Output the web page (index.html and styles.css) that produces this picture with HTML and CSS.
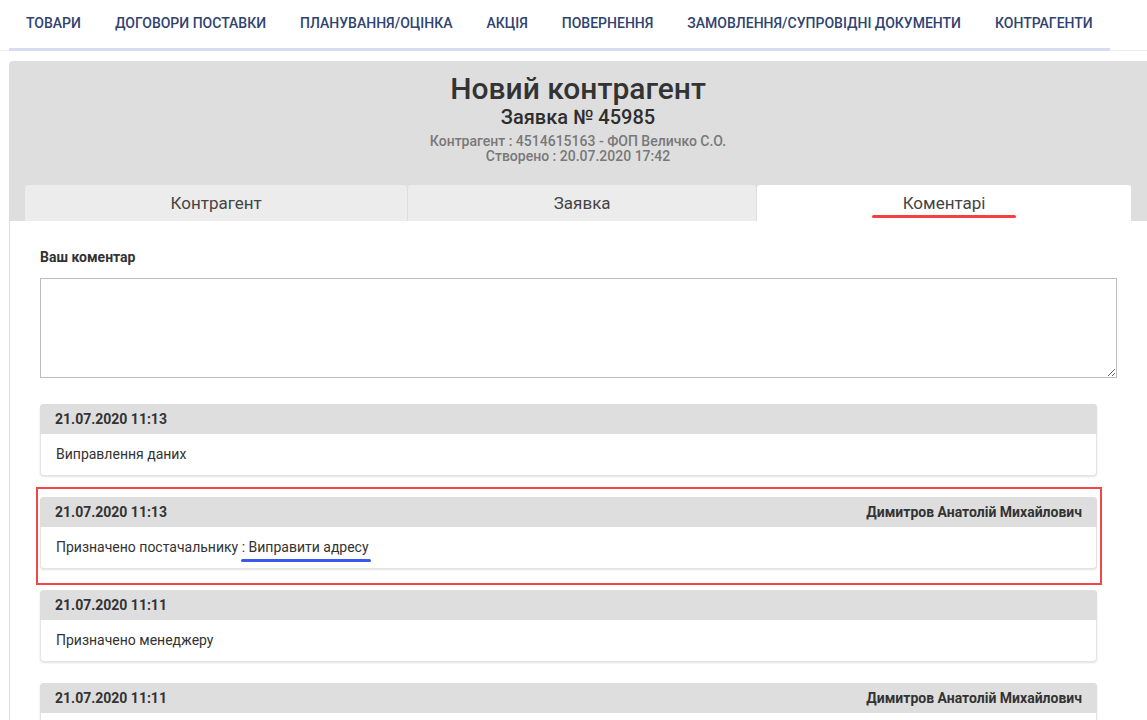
FILE: index.html
```html
<!DOCTYPE html>
<html lang="uk">
<head>
<meta charset="utf-8">
<title>Новий контрагент</title>
<link rel="stylesheet" href="styles.css">
</head>
<body>
<nav class="topnav">
  <ul class="topnav-list">
    <li class="topnav-item">Товари</li>
    <li class="topnav-item">Договори поставки</li>
    <li class="topnav-item">Планування/оцінка</li>
    <li class="topnav-item">Акція</li>
    <li class="topnav-item">Повернення</li>
    <li class="topnav-item">Замовлення/супровідні документи</li>
    <li class="topnav-item">Контрагенти</li>
  </ul>
</nav>

<main class="page">
  <header class="page-header">
    <h1 class="page-title">Новий контрагент</h1>
    <h2 class="page-subtitle">Заявка № 45985</h2>
    <div class="page-meta">
      <div>Контрагент : 4514615163 - ФОП Величко С.О.</div>
      <div>Створено : 20.07.2020 17:42</div>
    </div>
    <div class="tabs">
      <div class="tab">Контрагент</div>
      <div class="tab">Заявка</div>
      <div class="tab tab-active">Коментарі</div>
    </div>
  </header>

  <section class="panel">
    <label class="field-label" for="comment">Ваш коментар</label>
    <textarea id="comment" class="comment-input"></textarea>

    <div class="comments">
      <article class="comment">
        <div class="comment-head"><span class="comment-date">21.07.2020 11:13</span></div>
        <div class="comment-body">Виправлення даних</div>
      </article>

      <article class="comment comment-highlight">
        <div class="comment-head"><span class="comment-date">21.07.2020 11:13</span><span class="comment-author">Димитров Анатолій Михайлович</span></div>
        <div class="comment-body">Призначено постачальнику <span class="marked">: Виправити адресу</span></div>
      </article>

      <article class="comment">
        <div class="comment-head"><span class="comment-date">21.07.2020 11:11</span></div>
        <div class="comment-body">Призначено менеджеру</div>
      </article>

      <article class="comment">
        <div class="comment-head"><span class="comment-date">21.07.2020 11:11</span><span class="comment-author">Димитров Анатолій Михайлович</span></div>
        <div class="comment-body"></div>
      </article>
    </div>
  </section>
</main>
</body>
</html>
```

FILE: styles.css
```css
* { box-sizing: border-box; }

html, body {
  margin: 0;
  padding: 0;
  background: #ffffff;
  font-family: Roboto, "Noto Sans", "Liberation Sans", sans-serif;
  color: #333333;
  overflow: hidden;
}

.topnav {
  height: 51px;
  border-bottom: 1px solid #ececec;
}

.topnav-list {
  display: inline-flex;
  margin: 0 0 0 9px;
  padding: 0;
  list-style: none;
  height: 51px;
  border-bottom: 3px solid #d5ddee;
}

.topnav-item {
  padding: 0 17px;
  line-height: 46px;
  font-size: 14px;
  font-weight: 500;
  text-transform: uppercase;
  color: #2f4370;
  white-space: nowrap;
}

.page {
  margin: 10px 0 0 9px;
}

.page-header {
  background: #dedede;
  border-top-left-radius: 4px;
  padding: 11px 16px 0;
  text-align: center;
}

.page-title {
  margin: 0;
  font-size: 30px;
  line-height: 34px;
  font-weight: 500;
  color: #333333;
}

.page-subtitle {
  margin: 0;
  font-size: 20px;
  line-height: 22px;
  font-weight: 500;
  color: #2e2e2e;
}

.page-meta {
  margin-top: 6px;
  font-size: 14px;
  line-height: 15px;
  font-weight: 500;
  color: #787878;
}

.tabs {
  display: flex;
  gap: 1px;
  margin-top: 21px;
}

.tab {
  flex: 1 1 auto;
  height: 36px;
  line-height: 36px;
  font-size: 17px;
  color: #444444;
  background: #ececec;
  border-radius: 3px 3px 0 0;
  text-align: center;
}

.tab-active {
  background: #ffffff;
  position: relative;
}

.tab-active::after {
  content: "";
  position: absolute;
  left: 50%;
  bottom: 3px;
  width: 144px;
  margin-left: -72px;
  height: 3px;
  border-radius: 2px;
  background: #f34141;
}

.panel {
  border-left: 1px solid #dddddd;
  padding: 26px 30px 0 30px;
  min-height: 520px;
}

.field-label {
  display: block;
  font-size: 14px;
  line-height: 20px;
  font-weight: 700;
  color: #333333;
}

.comment-input {
  display: block;
  width: 100%;
  height: 100px;
  margin: 11px 0 26px;
  border: 1px solid #bdbdbd;
  border-radius: 0;
  resize: vertical;
  font-family: inherit;
  font-size: 14px;
  background: #ffffff;
}

.comments {
  margin-right: 20px;
  display: flex;
  flex-direction: column;
  gap: 21px;
}

.comment {
  border: 1px solid #e4e4e4;
  border-top: none;
  border-radius: 4px;
  background: #ffffff;
  box-shadow: 0 1px 2px rgba(0, 0, 0, 0.12);
}

.comment-head {
  display: flex;
  justify-content: space-between;
  height: 30px;
  line-height: 30px;
  padding: 0 15px;
  margin: 0 -1px;
  background: #dedede;
  border-radius: 4px 4px 0 0;
  font-size: 14px;
  font-weight: 700;
  color: #333333;
}

.comment-body {
  height: 41px;
  line-height: 40px;
  padding: 0 15px;
  font-size: 14px;
  color: #333333;
}

.comment-highlight {
  position: relative;
}

.comment-highlight::before {
  content: "";
  position: absolute;
  left: -5px;
  top: -10px;
  right: -6px;
  bottom: -17px;
  border: 2px solid #f04848;
  pointer-events: none;
}

.marked {
  position: relative;
}

.marked::after {
  content: "";
  position: absolute;
  left: -1px;
  right: -2px;
  bottom: -7px;
  height: 3px;
  border-radius: 2px;
  background: #3b57f2;
}
```
